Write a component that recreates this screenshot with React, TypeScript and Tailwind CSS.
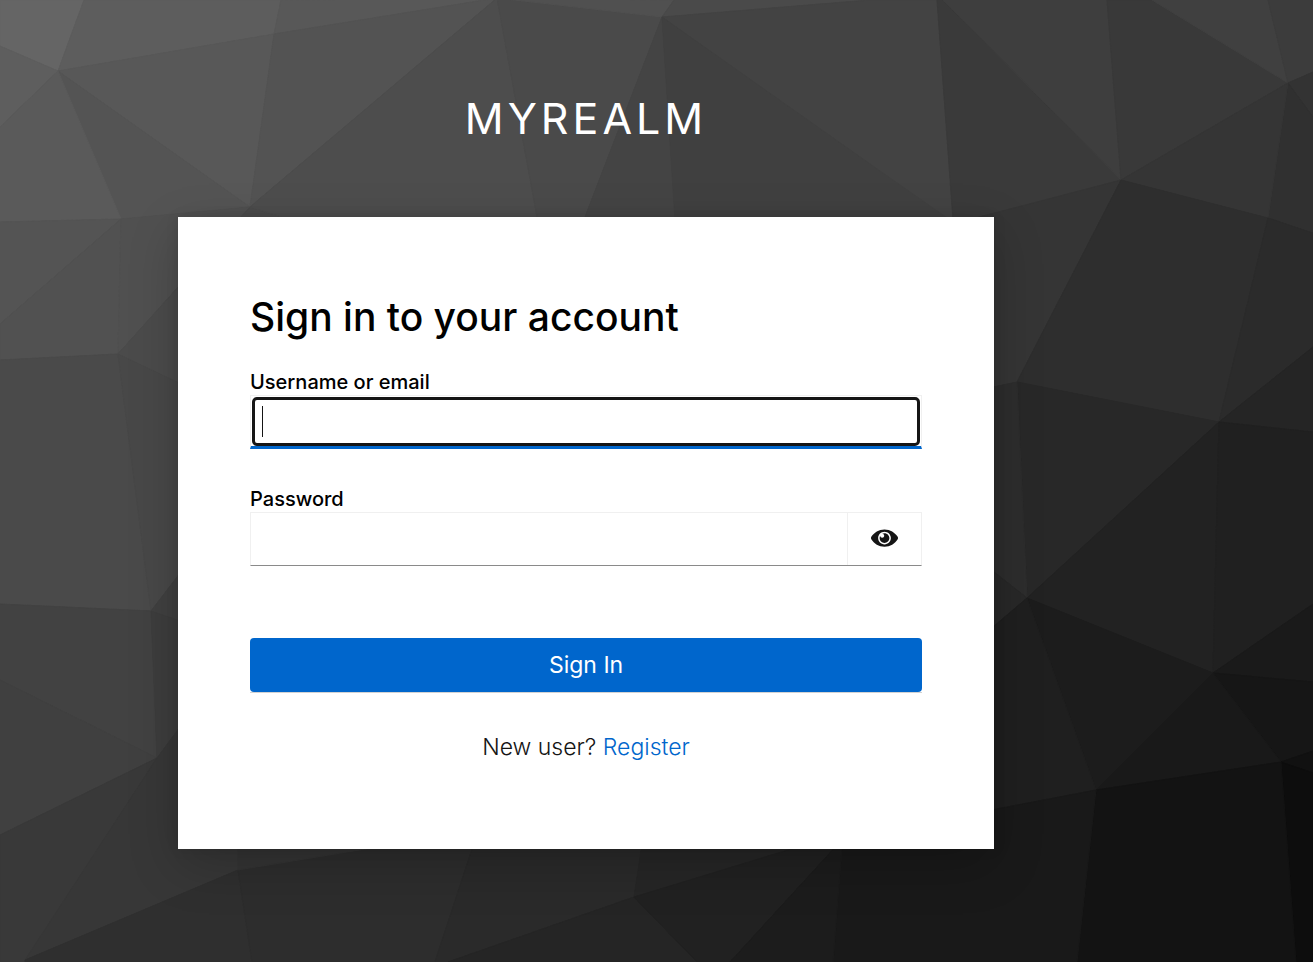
import { useState } from "react";
import { FaEyeSlash } from "react-icons/fa";

type Facet = { fill: string; points: string };

const facets: Facet[] = [
  { fill: "#656565", points: "0,0 84,0 58,71 0,46" },
  { fill: "#5e5e5e", points: "0,46 58,71 0,127" },
  { fill: "#5d5d5d", points: "84,0 281,0 274,34 58,71" },
  { fill: "#585858", points: "281,0 497,-2 274,34" },
  { fill: "#585858", points: "58,71 274,34 250,207" },
  { fill: "#545454", points: "58,71 250,207 121,219" },
  { fill: "#5a5a5a", points: "58,71 121,219 0,222 0,127" },
  { fill: "#535353", points: "274,34 497,-2 250,207" },
  { fill: "#545454", points: "0,222 121,219 0,324" },
  { fill: "#515151", points: "121,219 0,324 0,360 118,354" },
  { fill: "#505050", points: "121,219 250,207 118,354" },
  { fill: "#4b4b4b", points: "250,207 282,217 282,300 118,354" },
  { fill: "#4d4d4d", points: "497,-2 250,207 282,217 537,217" },
  { fill: "#4a4a4a", points: "497,-2 537,217 585,217 662,17" },
  { fill: "#505050", points: "497,-2 674,0 662,17" },
  { fill: "#4a4a4a", points: "674,0 870,0 662,17" },
  { fill: "#444444", points: "662,17 585,217 675,217" },
  { fill: "#434343", points: "662,17 870,0 937,0 953,220 940,220" },
  { fill: "#404040", points: "662,17 675,220 950,220 880,171" },
  { fill: "#3a3a3a", points: "937,0 943,0 1121,180 985,217 953,220" },
  { fill: "#3e3e3e", points: "943,0 1107,0 1121,180" },
  { fill: "#393939", points: "1107,0 1152,0 1288,83 1121,180" },
  { fill: "#404040", points: "1152,0 1268,0 1288,83" },
  { fill: "#3c3c3c", points: "1268,0 1313,0 1313,72 1288,83" },
  { fill: "#333333", points: "1288,83 1313,72 1313,117" },
  { fill: "#303030", points: "1288,83 1313,117 1313,233 1268,218" },
  { fill: "#353535", points: "1121,180 1288,83 1268,218" },
  { fill: "#353535", points: "1121,180 960,222 960,394 1017,382" },
  { fill: "#2e2e2e", points: "1121,180 1268,218 1219,422 1017,382" },
  { fill: "#2b2b2b", points: "1268,218 1313,233 1313,347 1219,422" },
  { fill: "#252525", points: "1219,422 1313,347 1313,432" },
  { fill: "#282828", points: "1017,382 1219,422 1027,598" },
  { fill: "#2d2d2d", points: "1017,382 960,394 960,545 1027,598" },
  { fill: "#222222", points: "1219,422 1027,598 1213,673" },
  { fill: "#202020", points: "1219,422 1313,432 1313,604 1213,673" },
  { fill: "#282828", points: "1027,598 960,545 960,655" },
  { fill: "#1c1c1c", points: "1027,598 1213,673 1096,790" },
  { fill: "#1f1f1f", points: "1027,598 960,655 960,816 1096,790" },
  { fill: "#1a1a1a", points: "1213,673 1313,604 1313,682" },
  { fill: "#161616", points: "1213,673 1313,682 1313,751 1281,762" },
  { fill: "#191919", points: "1213,673 1281,762 1096,790" },
  { fill: "#111111", points: "1281,762 1313,751 1313,773" },
  { fill: "#0d0d0d", points: "1281,762 1313,773 1313,962 1296,962" },
  { fill: "#131313", points: "1096,790 1281,762 1296,962 1077,962" },
  { fill: "#191919", points: "1096,790 960,816 842,845 833,962 1077,962" },
  { fill: "#4a4a4a", points: "118,354 0,360 0,604 151,611" },
  { fill: "#4b4b4b", points: "118,354 200,265 200,393" },
  { fill: "#484848", points: "118,354 200,393 200,547 151,611" },
  { fill: "#404040", points: "151,611 200,547 200,628" },
  { fill: "#424242", points: "151,611 0,604 0,680 157,758" },
  { fill: "#404040", points: "0,680 157,758 0,835" },
  { fill: "#3d3d3d", points: "151,611 200,628 200,700 157,758" },
  { fill: "#393939", points: "157,758 0,835 0,962 25,962" },
  { fill: "#373737", points: "157,758 200,700 238,840 238,870 25,960" },
  { fill: "#2f2f2f", points: "238,870 25,960 25,962 252,962" },
  { fill: "#2d2d2d", points: "238,870 252,962 435,962 480,825" },
  { fill: "#343434", points: "238,870 238,840 420,840" },
  { fill: "#2a2a2a", points: "472,849 480,825 645,825 634,897 448,962 435,962" },
  { fill: "#252525", points: "634,897 448,962 697,962" },
  { fill: "#262626", points: "634,897 645,825 860,831" },
  { fill: "#212121", points: "634,897 697,962 730,962 850,831" },
  { fill: "#1c1c1c", points: "730,962 850,831 842,849 833,962" },
];

function FacetedBackdrop() {
  return (
    <svg
      aria-hidden="true"
      className="absolute inset-0 h-full w-full"
      viewBox="0 0 1313 962"
      preserveAspectRatio="xMidYMid slice"
    >
      {facets.map((facet, index) => (
        <polygon key={index} points={facet.points} fill={facet.fill} stroke={facet.fill} strokeWidth="1" />
      ))}
    </svg>
  );
}

function EyeIcon() {
  return (
    <svg aria-hidden="true" viewBox="0 0 576 512" fill="currentColor" className="h-6 w-[27px]">
      <path d="M569.354 231.631C512.969 135.949 407.81 72 288 72 168.14 72 63.004 135.994 6.646 231.631a47.999 47.999 0 0 0 0 48.739C63.031 376.051 168.19 440 288 440c119.86 0 224.996-63.994 281.354-159.631a47.997 47.997 0 0 0 0-48.738zM288 392c-75.162 0-136-60.827-136-136 0-75.162 60.826-136 136-136 75.162 0 136 60.826 136 136 0 75.162-60.826 136-136 136zm104-136c0 57.438-46.562 104-104 104s-104-46.562-104-104c0-17.708 4.431-34.379 12.236-48.973l-.001.032c0 23.651 19.173 42.824 42.824 42.824s42.824-19.173 42.824-42.824c0-23.651-19.173-42.824-42.824-42.824l-.032.001C253.621 156.431 270.292 152 288 152c57.438 0 104 46.562 104 104z" />
    </svg>
  );
}

export default function App() {
  const [visible, setVisible] = useState(false);
  const [username, setUsername] = useState("");
  const [editing, setEditing] = useState(true);
  const showCaret = editing && username === "";

  return (
    <div className="relative min-h-screen overflow-hidden bg-[#202020] font-['Inter',sans-serif] text-[#151515]">
      <FacetedBackdrop />
      <div className="relative ml-[13.56%] w-full max-w-[816px] pb-28">
        <header className="pt-[86px] pb-[67px] text-center">
          <div className="text-[43px] leading-[64px] font-normal tracking-[4px] text-white uppercase">myrealm</div>
        </header>

        <main className="bg-white px-[72px] pt-[72px] pb-[84px] shadow-[0_16px_48px_rgba(3,3,3,0.2),0_0_12px_rgba(3,3,3,0.1)]">
          <h1 className="text-[39px] leading-[56px] font-medium text-black">Sign in to your account</h1>

          <form className="mt-6" onSubmit={(event) => event.preventDefault()}>
            <label htmlFor="username" className="block text-[20px] leading-[26px] font-medium text-black">
              Username or email
            </label>
            <div className="relative h-[54px] border border-b-[3px] border-[#f0f0f0] border-b-[#0066cc] px-px pt-px">
              <input
                id="username"
                name="username"
                type="text"
                autoFocus
                value={username}
                onChange={(event) => setUsername(event.target.value)}
                onFocus={() => setEditing(true)}
                onBlur={() => setEditing(false)}
                className={
                  showCaret
                    ? "block h-full w-full rounded-[5px] border-[3px] border-[#151515] bg-white px-[7px] text-[24px] caret-transparent outline-none"
                    : "block h-full w-full rounded-[5px] border-[3px] border-[#151515] bg-white px-[7px] text-[24px] outline-none"
                }
              />
              {showCaret && (
                <span className="pointer-events-none absolute top-[10px] left-[11px] h-[31px] w-px bg-[#151515]" />
              )}
            </div>

            <label htmlFor="password" className="mt-[37px] block text-[20px] leading-[26px] font-medium text-black">
              Password
            </label>
            <div className="flex h-[54px] border border-[#f0f0f0] border-b-[#8a8a8a]">
              <input
                id="password"
                name="password"
                type={visible ? "text" : "password"}
                className="min-w-0 flex-1 bg-white px-3 text-[24px] outline-none"
              />
              <button
                type="button"
                aria-label={visible ? "Hide password" : "Show password"}
                onClick={() => setVisible(!visible)}
                className="flex w-[74px] items-center justify-center border-l border-[#f0f0f0] pb-[2px] text-[27px]"
              >
                {visible ? <FaEyeSlash /> : <EyeIcon />}
              </button>
            </div>

            <div className="mt-[72px] border-b border-[#d2d2d2]">
              <button
                type="submit"
                className="block h-[54px] w-full rounded-[4px] bg-[#0066cc] text-[23px] leading-[36px] text-white"
              >
                Sign In
              </button>
            </div>
          </form>

          <p className="mt-9 text-center text-[23px] leading-[36px] font-light">
            New user?{" "}
            <a href="#register" className="text-[#0066cc]">
              Register
            </a>
          </p>
        </main>
      </div>
    </div>
  );
}
